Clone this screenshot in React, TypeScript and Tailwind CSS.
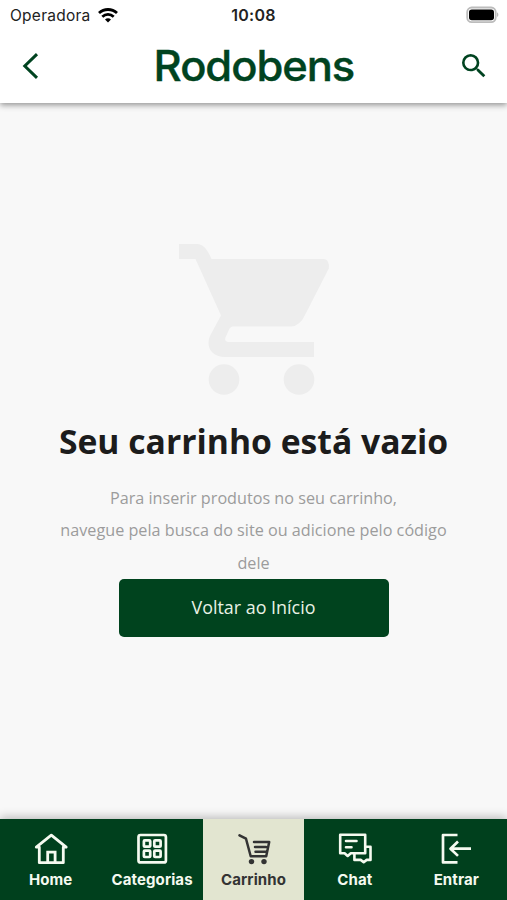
import type { ReactNode } from "react";
import clsx from "clsx";

const HomeIcon = () => (
  <svg width="36" height="34" viewBox="0 0 36 34" fill="none" stroke="currentColor" strokeWidth="2.8" strokeLinejoin="round" strokeLinecap="round">
    <path d="M3.3 15.2 18.3 3.1l14.9 12.1H30.3v15.5H6.3V15.2Z" />
    <path d="M14.7 30.5V20.1h7.4v10.4" strokeLinejoin="miter" />
  </svg>
);

const GridIcon = () => (
  <svg width="36" height="34" viewBox="0 0 36 34" fill="none" stroke="currentColor" strokeWidth="2.7">
    <rect x="4.5" y="3" width="27.4" height="27.4" rx="2" />
    <rect x="9.9" y="8.4" width="6.3" height="6.3" rx="0.8" />
    <rect x="20.3" y="8.4" width="6.3" height="6.3" rx="0.8" />
    <rect x="9.9" y="18.7" width="6.3" height="6.3" rx="0.8" />
    <rect x="20.3" y="18.7" width="6.3" height="6.3" rx="0.8" />
  </svg>
);

const CartIcon = () => (
  <svg width="36" height="34" viewBox="0 0 36 34" fill="none" stroke="currentColor" strokeWidth="2.5" strokeLinejoin="round" strokeLinecap="round">
    <path d="m4.5 3.3 6.5 3.4 4.7 17.5h15.5l3-14.3H19M20 15.1h11M20.5 19.7h10.5" />
    <circle cx="16.5" cy="29.6" r="2.7" fill="currentColor" stroke="none" />
    <circle cx="29" cy="29.6" r="2.7" fill="currentColor" stroke="none" />
  </svg>
);

const ChatIcon = () => (
  <svg width="36" height="34" viewBox="0 0 36 34" fill="none" stroke="currentColor" strokeWidth="2.6" strokeLinejoin="round" strokeLinecap="round">
    <path d="M3.2 2.8h25v18.5H13.8L10.7 24l-3.1-2.7H3.2Z" />
    <path d="M9 9h10.5M9 15.2h5.5" />
    <path d="M28.5 14.7h5v13.2h-3.8l-3 2.3-3-2.3h-6.3v-6.2" />
  </svg>
);

const EnterIcon = () => (
  <svg width="36" height="34" viewBox="0 0 36 34" fill="none" stroke="currentColor" strokeWidth="2.7" strokeLinejoin="round">
    <path d="M19.5 3H5v27.4h14.5" />
    <path d="M33 16.7H12.5M20 9.5l-7.5 7.2 7.5 7.2" />
  </svg>
);

const tabs: { label: string; icon: ReactNode; active?: boolean }[] = [
  { label: "Home", icon: <HomeIcon /> },
  { label: "Categorias", icon: <GridIcon /> },
  { label: "Carrinho", icon: <CartIcon />, active: true },
  { label: "Chat", icon: <ChatIcon /> },
  { label: "Entrar", icon: <EnterIcon /> },
];

const StatusBar = () => (
  <div className="grid h-7 grid-cols-3 items-center pt-[2px] pr-[8px] pl-[10px] font-['Inter',sans-serif] text-[#222]">
    <div className="flex items-center gap-[7px]">
      <span className="pt-px text-[15.5px] leading-5 tracking-[0.25px]">Operadora</span>
      <svg width="20" height="15" viewBox="0 0 20 15" fill="none" stroke="#000" strokeWidth="2.8">
        <path d="M1 5.1c5.1-4.8 12.9-4.8 18 0" />
        <path d="M4.3 8.7c3.3-3 8.1-3 11.4 0" />
        <path d="M10 14.6 7 11.4c1.7-1.5 4.3-1.5 6 0Z" fill="#000" stroke="none" />
      </svg>
    </div>
    <span className="-ml-[2px] text-center text-[16px] leading-5 font-semibold tracking-[0.3px]">10:08</span>
    <div className="flex justify-end">
      <svg width="34" height="18" viewBox="0 0 34 18">
        <rect x="2.2" y="1.5" width="28.5" height="14.6" rx="4.5" fill="#fff" stroke="#bcbcbc" strokeWidth="1.8" />
        <rect x="4" y="3.4" width="25" height="10.9" rx="2.8" fill="#000" />
        <path d="M32 6.6c1.8.6 1.8 3.8 0 4.4Z" fill="#bcbcbc" />
      </svg>
    </div>
  </div>
);

const Header = () => (
  <header className="relative z-10 h-[103px] bg-white shadow-[0_2px_6px_rgba(0,0,0,0.42)]">
    <StatusBar />
    <div className="flex h-[75px] items-center justify-between pr-[17px] pl-[18px] text-[#004320]">
      <button type="button" aria-label="Voltar">
        <svg width="26" height="28" viewBox="0 0 26 28" fill="none" stroke="currentColor" strokeWidth="3">
          <path d="M19 2.2 6.8 14 19 25.8" />
        </svg>
      </button>
      <span className="ml-[6px] inline-block w-[202px] text-center font-['Inter',sans-serif] text-[42px] leading-[60px] font-medium tracking-[-1px] whitespace-nowrap [-webkit-text-stroke:0.4px_#004320]">
        <span className="-mt-[2px] inline-block scale-x-[1.035]">Rodobens</span>
      </span>
      <button type="button" aria-label="Buscar">
        <svg width="32" height="32" viewBox="0 0 24 24" fill="currentColor">
          <path d="M15.5 14h-.79l-.28-.27A6.47 6.47 0 0 0 16 9.5 6.5 6.5 0 1 0 9.5 16c1.61 0 3.09-.59 4.23-1.57l.27.28v.79l5 4.99L20.49 19l-4.99-5zm-6 0C7.01 14 5 11.99 5 9.5S7.01 5 9.5 5 14 7.01 14 9.5 11.99 14 9.5 14z" />
        </svg>
      </button>
    </div>
  </header>
);

const EmptyCart = () => (
  <main className="flex flex-1 flex-col items-center pt-[141px] font-['Open_Sans',sans-serif]">
    <svg width="150" height="151" viewBox="0 0 150 151" fill="#ededed">
      <path d="M0 0h18c7 0 11 7 14.5 15h112c4 0 6 4 5.3 9.5L126 71q-5 11-14 11.5H54q-2 0-3.5 2l-4 9q-1.5 4 3 4.5h85.5v15H46c-15 0-20-12-14-23l10-18.5L16.5 15H0Z" />
      <circle cx="45" cy="135.5" r="15.3" />
      <circle cx="120" cy="135.5" r="15.3" />
    </svg>
    <h1 className="mt-[22px] text-[33.7px] leading-[48px] font-bold whitespace-nowrap text-[#1c1c1c]">
      Seu carrinho está vazio
    </h1>
    <p className="mt-[17px] w-[400px] text-center text-[16.2px] leading-[32.3px] text-[#9c9c9c]">
      Para inserir produtos no seu carrinho,
      <br />
      navegue pela busca do site ou adicione pelo código dele
    </p>
    <button type="button" className="h-[58px] w-[270px] rounded-[5px] bg-[#00431e] text-[17.9px] text-[#e9f2e5]">
      Voltar ao Início
    </button>
  </main>
);

const TabBar = () => (
  <nav className="grid h-[81px] grid-cols-5 bg-[#00401d] font-['Inter',sans-serif] shadow-[0_-2px_9px_rgba(0,0,0,0.25)]">
    {tabs.map((tab) => (
      <button
        key={tab.label}
        type="button"
        className={clsx(
          "flex flex-col items-center pt-[13px]",
          tab.active ? "bg-[#e2e5d0] text-[#333]" : "text-[#f5faf0]"
        )}
      >
        {tab.icon}
        <span className="mt-[4px] text-[15px] leading-5 font-bold tracking-[0.1px]">{tab.label}</span>
      </button>
    ))}
  </nav>
);

export default function App() {
  return (
    <div className="flex h-screen w-full flex-col overflow-hidden bg-[#f8f8f8]">
      <Header />
      <EmptyCart />
      <TabBar />
    </div>
  );
}
